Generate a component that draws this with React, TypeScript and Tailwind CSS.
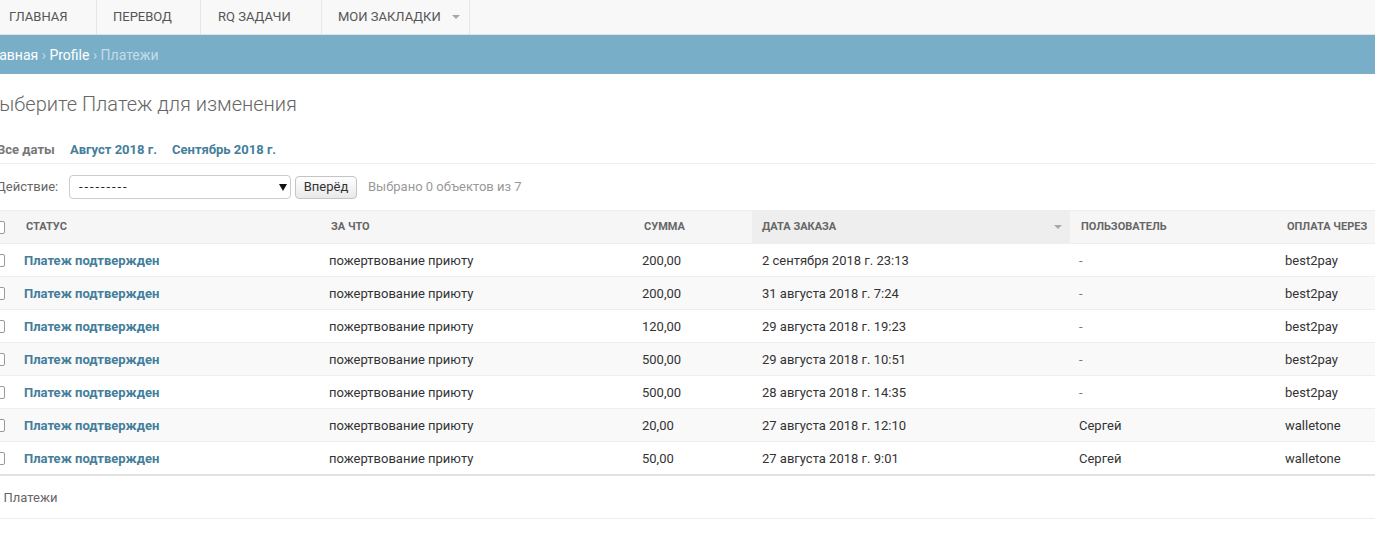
import React from 'react'

const font = { fontFamily: 'Roboto, "Noto Sans", sans-serif' }

interface Payment {
  amount: string
  date: string
  user: string
  via: string
}

const payments: Payment[] = [
  { amount: '200,00', date: '2 сентября 2018 г. 23:13', user: '-', via: 'best2pay' },
  { amount: '200,00', date: '31 августа 2018 г. 7:24', user: '-', via: 'best2pay' },
  { amount: '120,00', date: '29 августа 2018 г. 19:23', user: '-', via: 'best2pay' },
  { amount: '500,00', date: '29 августа 2018 г. 10:51', user: '-', via: 'best2pay' },
  { amount: '500,00', date: '28 августа 2018 г. 14:35', user: '-', via: 'best2pay' },
  { amount: '20,00', date: '27 августа 2018 г. 12:10', user: 'Сергей', via: 'walletone' },
  { amount: '50,00', date: '27 августа 2018 г. 9:01', user: 'Сергей', via: 'walletone' },
]

const navItems = [
  { label: 'Главная', w: 'w-[97px]', pl: 'pl-[9px]' },
  { label: 'Перевод', w: 'w-[104px]', pl: 'pl-[16px]' },
  { label: 'RQ задачи', w: 'w-[121px]', pl: 'pl-[17px]' },
  { label: 'Мои закладки', w: 'w-[148px]', pl: 'pl-[16px]', caret: true },
]

function Caret({ className = '' }: { className?: string }) {
  return (
    <svg width="8" height="4" viewBox="0 0 8 4" className={className}>
      <path d="M0 0h8L4 4z" fill="#a8a8a8" />
    </svg>
  )
}

function Checkbox() {
  return (
    <input
      type="checkbox"
      readOnly
      className="m-0 block h-[13px] w-[13px] appearance-none rounded-[2px] border border-[#9a9a9a] bg-white"
    />
  )
}

export default function App() {
  return (
    <div className="h-[555px] w-[1375px] overflow-hidden bg-white text-[#333]" style={font}>
      {/* верхнее меню */}
      <div className="flex h-[35px] border-b border-[#e2e2e2] bg-[#f8f8f8]">
        {navItems.map((item) => (
          <div
            key={item.label}
            className={`flex h-full items-center whitespace-nowrap border-r border-[#e7e7e7] text-[13px] uppercase text-[#555] ${item.w} ${item.pl}`}
          >
            {item.label}
            {item.caret && <Caret className="ml-[11px]" />}
          </div>
        ))}
      </div>

      <div className="-ml-[13px]">
        {/* хлебные крошки */}
        <div className="flex h-[39px] items-center bg-[#79aec8] pt-[2px] text-[14px] text-white">
          <div className="-ml-[2px]">
            Главная <span className="text-[#c4dce8]">›</span> Profile{' '}
            <span className="text-[#c4dce8]">› Платежи</span>
          </div>
        </div>

        <h1 className="pt-[18px] text-[20px] font-light leading-[24px] text-[#666]">
          Выберите Платеж для изменения
        </h1>

        {/* иерархия дат */}
        <div className="flex border-b border-[#eee] pb-[5px] pl-[10px] pt-[26px] text-[13px] font-bold leading-[16px]">
          <span className="w-[73px] text-[#777]">Все даты</span>
          <span className="w-[102px] text-[#447e9b]">Август 2018 г.</span>
          <span className="text-[#447e9b]">Сентябрь 2018 г.</span>
        </div>

        {/* действия */}
        <div className="flex items-center pb-[11px] pl-[9px] pt-[11px] text-[13px]">
          <span className="w-[73px] text-[#666]">Действие:</span>
          <div className="flex h-[24px] w-[222px] items-center justify-between rounded-[4px] border border-[#ccc] bg-white pl-[9px] pr-[3px] text-[#222]">
            <span className="tracking-[1.9px]">---------</span>
            <svg width="8" height="7" viewBox="0 0 8 7">
              <path d="M0 0h8L4 7z" fill="#111" />
            </svg>
          </div>
          <button className="ml-[4px] flex h-[23px] w-[62px] items-center justify-center rounded-[4px] border border-[#c4c4c4] bg-gradient-to-b from-white to-[#e9e9e9] text-[13px] text-[#333]">
            Вперёд
          </button>
          <span className="ml-[11px] text-[#999]">Выбрано 0 объектов из 7</span>
        </div>

        {/* таблица */}
        <div className="border-b-2 border-[#e2e2e2]">
          <div className="flex h-[33px] border-t border-[#eee] bg-[#f6f6f6] text-[11px] font-bold uppercase text-[#666]">
            <div className="flex w-[27px] items-center pl-[5px]">
              <Checkbox />
            </div>
            <div className="flex w-[305px] items-center pl-[12px]">Статус</div>
            <div className="flex w-[313px] items-center pl-[12px]">За что</div>
            <div className="flex w-[120px] items-center pl-[12px]">Сумма</div>
            <div className="flex w-[318px] items-center justify-between bg-[#eee] pl-[10px] pr-[8px]">
              <span>Дата заказа</span>
              <Caret />
            </div>
            <div className="flex w-[205px] items-center pl-[11px]">Пользователь</div>
            <div className="flex flex-1 items-center pl-[12px]">Оплата через</div>
          </div>
          {payments.map((p, i) => (
            <div
              key={i}
              className={`flex h-[33px] border-t border-[#eee] pt-[1px] text-[13px] ${i % 2 === 1 ? 'bg-[#f9f9f9]' : 'bg-white'}`}
            >
              <div className="flex w-[27px] items-center pl-[5px]">
                <Checkbox />
              </div>
              <div className="flex w-[305px] items-center pl-[10px] font-bold text-[#447e9b]">
                Платеж подтвержден
              </div>
              <div className="flex w-[313px] items-center pl-[10px]">пожертвование приюту</div>
              <div className="flex w-[120px] items-center pl-[10px]">{p.amount}</div>
              <div className="flex w-[318px] items-center pl-[10px]">{p.date}</div>
              <div className={`flex w-[205px] items-center pl-[9px] ${p.user === '-' ? 'text-[#777]' : ''}`}>
                {p.user}
              </div>
              <div className="flex flex-1 items-center pl-[10px]">{p.via}</div>
            </div>
          ))}
        </div>

        {/* пагинатор */}
        <div className="border-b border-[#eee] pb-[12px] pl-[6px] pt-[14px] text-[13px] leading-[16px] text-[#666]">
          7 Платежи
        </div>
      </div>
    </div>
  )
}
